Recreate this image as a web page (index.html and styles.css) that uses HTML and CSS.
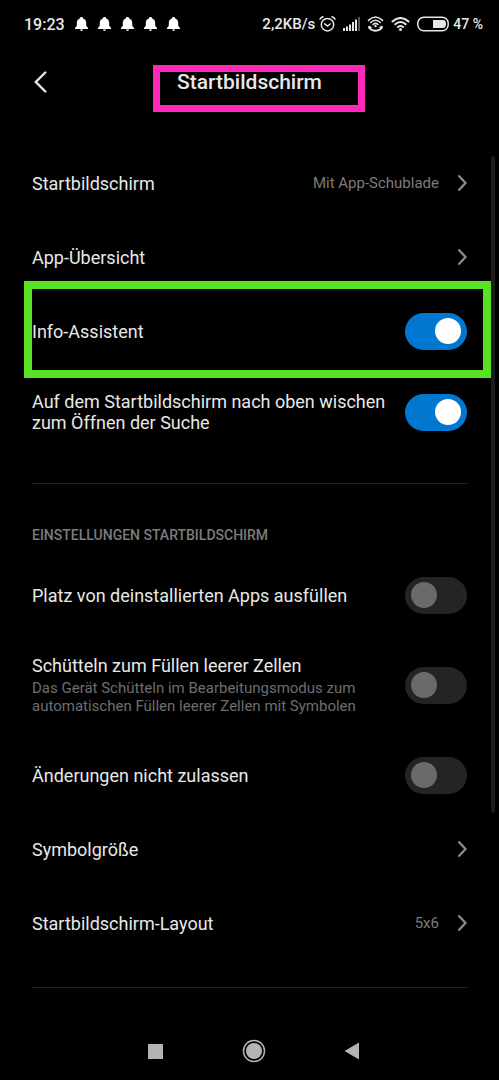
FILE: index.html
```html
<!DOCTYPE html>
<html lang="de">
<head>
    <meta charset="UTF-8">
    <meta name="viewport" content="width=device-width, initial-scale=1.0">
    <title>Startbildschirm</title>
    <link rel="stylesheet" href="styles.css">
</head>
<body>
    <svg class="defs" width="0" height="0" aria-hidden="true">
        <symbol id="bell" viewBox="0 0 13 14">
            <path d="M6.500 0C7.500 0 8.200.6 8.200 1.400C10.300 2 11.200 3.800 11.200 5.700V8.800L13 11V12H0V11L1.800 8.800V5.700C1.800 3.800 2.700 2 4.800 1.400C4.800.6 5.500 0 6.500 0ZM4.900 12.600H8.100C8 13.500 7.300 14 6.500 14S5 13.500 4.900 12.600Z" fill="#fff"/>
        </symbol>
        <symbol id="chevron" viewBox="0 0 9 16">
            <path d="M1.200 1.200L7.500 8L1.200 14.800" fill="none" stroke="#8c8c8c" stroke-width="2.300" stroke-linecap="round"/>
        </symbol>
    </svg>

    <div class="status-bar">
        <div class="status-left">
            <span class="time">19:23</span>
            <div class="bells">
                <svg width="13" height="14"><use href="#bell"/></svg>
                <svg width="13" height="14"><use href="#bell"/></svg>
                <svg width="13" height="14"><use href="#bell"/></svg>
                <svg width="13" height="14"><use href="#bell"/></svg>
                <svg width="13" height="14"><use href="#bell"/></svg>
            </div>
        </div>
        <div class="status-right">
            <span class="speed">2,2KB/s</span>
            <div class="status-icons">
                <!-- alarm -->
                <svg width="17" height="16" viewBox="0 0 17 16" fill="none" stroke="#e6e6e6" stroke-linecap="round">
                    <circle cx="8.500" cy="8.700" r="6.200" stroke-width="1.500"/>
                    <path d="M5.700 7.800L8.500 10L11.200 8" stroke-width="1.500"/>
                    <path d="M1 3.200Q2 1.500 4 .8M16 3.200Q15 1.500 13 .8" stroke-width="1.500"/>
                </svg>
                <!-- signal -->
                <svg width="17" height="14" viewBox="0 0 17 14">
                    <path d="M0 11H2V14H0ZM3 9.500H5V14H3ZM6 7.500H8V14H6ZM9 5H11V14H9ZM12 2.500H14V14H12Z" fill="#e6e6e6"/>
                    <path d="M15 0H17V14H15Z" fill="#555"/>
                </svg>
                <!-- wifi sharing -->
                <svg width="17" height="16" viewBox="0 0 17 16" fill="none" stroke="#e6e6e6" stroke-width="1.500" stroke-linecap="round">
                    <path d="M1.500 4.400Q8.500-2.400 15.500 4.400M3.700 6.500Q8.500 1.900 13.300 6.500M6 8.500Q8.500 6.200 11 8.500"/>
                    <circle cx="8.500" cy="10" r="1.200" fill="#e6e6e6" stroke="none"/>
                    <path d="M2.200 11Q3.500 14.700 8.500 14.700T14.800 11" stroke-width="2"/>
                    <path d="M1 12.600L2 9.400L5.400 11.500ZM16 12.600L15 9.400L11.600 11.500Z" fill="#e6e6e6" stroke="none"/>
                </svg>
                <!-- wifi -->
                <svg width="19" height="14" viewBox="0 0 19 14" fill="none" stroke="#e6e6e6" stroke-width="2">
                    <path d="M.8 4.900Q9.500-2.900 18.200 4.900M3.600 7.800Q9.500 2.300 15.400 7.800M6.300 10.500Q9.500 7.500 12.700 10.500"/>
                    <circle cx="9.500" cy="12.400" r="1.500" fill="#e6e6e6" stroke="none"/>
                </svg>
                <!-- battery -->
                <svg width="32" height="16" viewBox="0 0 32 16">
                    <rect x=".8" y="1.300" width="30.400" height="13.400" rx="6" fill="none" stroke="#e6e6e6" stroke-width="1.500"/>
                    <path d="M16 4H26Q29 4 29 8T26 12H16Z" fill="#e6e6e6"/>
                </svg>
            </div>
            <span class="battery">47 %</span>
        </div>
    </div>

    <header class="header">
        <button class="back" aria-label="Zurück">
            <svg width="13" height="22" viewBox="0 0 13 22">
                <path d="M11.300 1.500L1.800 11L11.300 20.500" fill="none" stroke="#e8e8e8" stroke-width="2.400" stroke-linecap="round"/>
            </svg>
        </button>
        <h1 class="title">Startbildschirm</h1>
    </header>

    <main class="settings">
        <div class="scrollbar"></div>
        <section class="group">
            <a class="row" href="#">
                <span class="label">Startbildschirm</span>
                <span class="value">Mit App-Schublade</span>
                <svg class="chevron" width="9" height="16"><use href="#chevron"/></svg>
            </a>
            <a class="row" href="#">
                <span class="label">App-Übersicht</span>
                <svg class="chevron" width="9" height="16"><use href="#chevron"/></svg>
            </a>
            <label class="row highlight">
                <span class="label">Info-Assistent</span>
                <input class="switch" type="checkbox" checked>
            </label>
            <label class="row">
                <span class="label">Auf dem Startbildschirm nach oben wischen zum Öffnen der Suche</span>
                <input class="switch" type="checkbox" checked>
            </label>
        </section>
        <section class="group">
            <h2 class="group-title">EINSTELLUNGEN STARTBILDSCHIRM</h2>
            <label class="row">
                <span class="label">Platz von deinstallierten Apps ausfüllen</span>
                <input class="switch" type="checkbox">
            </label>
            <label class="row">
                <span class="label">Schütteln zum Füllen leerer Zellen
                    <small class="hint">Das Gerät Schütteln im Bearbeitungsmodus zum automatischen Füllen leerer Zellen mit Symbolen</small>
                </span>
                <input class="switch" type="checkbox">
            </label>
            <label class="row">
                <span class="label">Änderungen nicht zulassen</span>
                <input class="switch" type="checkbox">
            </label>
            <a class="row" href="#">
                <span class="label">Symbolgröße</span>
                <svg class="chevron" width="9" height="16"><use href="#chevron"/></svg>
            </a>
            <a class="row" href="#">
                <span class="label">Startbildschirm-Layout</span>
                <span class="value">5x6</span>
                <svg class="chevron" width="9" height="16"><use href="#chevron"/></svg>
            </a>
        </section>
    </main>

    <nav class="nav-bar">
        <button aria-label="Letzte Apps">
            <svg width="15" height="15"><rect width="15" height="15" fill="#b4b4b4"/></svg>
        </button>
        <button aria-label="Startseite">
            <svg width="24" height="24" viewBox="0 0 24 24">
                <circle cx="12" cy="12" r="10.500" fill="none" stroke="#b4b4b4" stroke-width="1.500"/>
                <circle cx="12" cy="12" r="8" fill="#b4b4b4"/>
            </svg>
        </button>
        <button aria-label="Zurück">
            <svg width="15" height="18" viewBox="0 0 15 18"><path d="M15 .5V17.500L.5 9Z" fill="#b4b4b4"/></svg>
        </button>
    </nav>
</body>
</html>
```
FILE: styles.css
```css
* {
    box-sizing: border-box;
}
body {
    display: flex;
    flex-direction: column;
    min-height: 100vh;
    margin: 0;
    background-color: #000;
    color: #e8e8e8;
    font-family: Roboto, sans-serif;
}
svg {
    display: block;
    flex-shrink: 0;
}
.defs {
    position: absolute;
}
button {
    display: flex;
    align-items: center;
    justify-content: center;
    padding: 0;
    border: none;
    background: none;
    cursor: pointer;
}
.status-bar {
    display: flex;
    align-items: center;
    justify-content: space-between;
    height: 48px;
    padding: 0 16px 0 24px;
    font-size: 15px;
    font-weight: 500;
}
.status-left,
.status-right {
    display: flex;
    align-items: center;
}
.status-left {
    gap: 10px;
}
.status-right {
    gap: 4px;
}
.time {
    font-size: 16px;
}
.battery {
    font-size: 14px;
}
.bells {
    display: flex;
    gap: 10px;
}
.status-icons {
    display: flex;
    align-items: center;
    gap: 7px;
}
.header {
    display: grid;
    grid-template-columns: 48px 1fr 48px;
    align-items: center;
    height: 98px;
    padding: 0 16px 30px;
}
.back {
    height: 48px;
}
.title {
    position: relative;
    justify-self: center;
    margin: 0;
    font-size: 21px;
    line-height: 28px;
    font-weight: 500;
}
.title::after {
    content: "";
    position: absolute;
    top: -3px;
    right: -43px;
    bottom: -16px;
    left: -24px;
    border: 7px solid #ff28b9;
}
.settings {
    position: relative;
}
.scrollbar {
    position: absolute;
    top: 10px;
    right: 4px;
    width: 4px;
    height: 78%;
    border-radius: 2px;
    background-color: #1c1c1c;
}
.group {
    margin: 0 32px;
    padding-bottom: 27px;
    border-bottom: 1px solid #212121;
}
.group-title {
    margin: 0;
    padding: 40px 0 12px;
    color: #7c7c7c;
    font-size: 14px;
    line-height: 22px;
    font-weight: 500;
}
.row {
    position: relative;
    display: flex;
    align-items: center;
    min-height: 74px;
    color: inherit;
    text-decoration: none;
    cursor: pointer;
}
.highlight::after {
    content: "";
    position: absolute;
    top: -13px;
    right: -24px;
    bottom: -10px;
    left: -8px;
    border: 8px solid #57e324;
    pointer-events: none;
}
.label {
    flex: 1;
    padding: 23px 0;
    font-size: 18px;
    line-height: 21px;
}
.hint {
    display: block;
    margin-top: 3px;
    color: #6e6e6e;
    font-size: 15px;
    line-height: 18px;
}
.value {
    color: #7c7c7c;
    font-size: 15px;
}
.chevron {
    margin-left: 19px;
}
.switch {
    appearance: none;
    flex-shrink: 0;
    width: 62px;
    height: 37px;
    margin: 0 0 0 16px;
    padding: 5px 6px;
    border-radius: 19px;
    background-color: #242424;
    cursor: pointer;
}
.switch::before {
    content: "";
    display: block;
    width: 26px;
    height: 26px;
    border-radius: 50%;
    background-color: #6a6a6a;
}
.switch:checked {
    background-color: #0077d0;
}
.switch:checked::before {
    margin-left: auto;
    background-color: #fff;
}
.nav-bar {
    display: flex;
    justify-content: center;
    gap: 50px;
    margin-top: auto;
    padding: 5px 0 5px 8px;
}
.nav-bar button {
    width: 48px;
    height: 48px;
}
```
